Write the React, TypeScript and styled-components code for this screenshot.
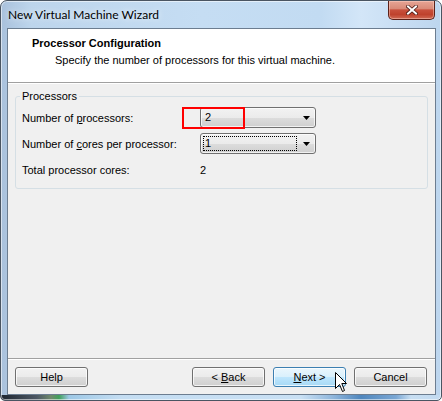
import React from "react";
import styled, { createGlobalStyle } from "styled-components";

const Global = createGlobalStyle`
  html, body { margin: 0; padding: 0; background: #ffffff; }
  body { font-family: "Liberation Sans", Arial, sans-serif; }
  * { box-sizing: border-box; }
`;

const Window = styled.div`
  position: relative;
  width: 442px;
  height: 401px;
  display: flex;
  flex-direction: column;
  padding: 0 5px 5px 6px;
  border: 1px solid #4a5562;
  border-radius: 7px 7px 5px 5px;
  box-shadow: inset 0 0 0 1px rgba(255, 255, 255, 0.55);
  background:
    linear-gradient(
        to right,
        #1e2630 0px,
        #4d5864 36px,
        #6f8a6c 50px,
        #3fa05a 58px,
        #9dc8e6 68px,
        #c4ddf2 120px,
        #c9e0f4 300px,
        #8fb6dc 332px,
        #4f86bd 360px,
        #7aa7d4 395px,
        #c7def2 410px,
        #c2daf0 442px
      )
      left bottom / 100% 5px no-repeat,
    linear-gradient(
      to right,
      #a9c1dc 0px,
      #bdd5ec 30px,
      #c5ddf3 200px,
      #c2dbf2 320px,
      #d3e6f8 360px,
      #bcd5ee 442px
    );
`;

const TitleBar = styled.div`
  height: 27px;
  display: flex;
  align-items: flex-start;
  justify-content: space-between;
`;

const TitleText = styled.span`
  font-family: Lato, "Noto Sans", sans-serif;
  font-size: 12px;
  line-height: 16px;
  color: #000;
  margin: 6px 0 0 1px;
  text-shadow: 0 0 6px rgba(255, 255, 255, 0.9);
`;

const CloseButton = styled.div`
  width: 47px;
  height: 19px;
  margin-right: 1px;
  border: 1px solid #5b2119;
  border-top: none;
  border-radius: 0 0 5px 5px;
  background: linear-gradient(
    #e6a595 0%,
    #d98a78 42%,
    #c8503c 50%,
    #bf422d 75%,
    #d06a54 100%
  );
  box-shadow: inset 0 0 0 1px rgba(255, 215, 205, 0.45);
  display: flex;
  align-items: center;
  justify-content: center;
`;

const Client = styled.div`
  flex: 1;
  display: flex;
  flex-direction: column;
  border: 1px solid #6c7d90;
  background: #f0f0f0;
  font-size: 11px;
  color: #000;
`;

const Header = styled.div`
  height: 54px;
  background: #ffffff;
  border-bottom: 1px solid #a0a0a0;
  padding: 7px 0 0 24px;
`;

const HeaderTitle = styled.div`
  font-weight: bold;
  font-size: 11px;
  line-height: 14px;
  margin-bottom: 3px;
`;

const HeaderSub = styled.div`
  font-size: 11px;
  line-height: 14px;
  margin-left: 23px;
`;

const Body = styled.div`
  flex: 1;
  border-top: 1px solid #ffffff;
  padding: 5px 7px 0 7px;
`;

const Group = styled.fieldset`
  margin: 0;
  padding: 0 6px 8px 6px;
  border: 1px solid #d5dfe5;
  border-radius: 3px;
`;

const GroupLegend = styled.legend`
  margin-left: -2px;
  padding: 0 2px;
  font-size: 11px;
  line-height: 14px;
`;

const FormGrid = styled.div`
  margin-top: 4px;
  display: grid;
  grid-template-columns: 178px 116px;
  grid-auto-rows: 21px;
  row-gap: 5px;
  align-items: center;
`;

const Label = styled.span`
  line-height: 14px;
`;

const ComboWrap = styled.div`
  position: relative;
  height: 21px;
`;

const Highlight = styled.div`
  position: absolute;
  left: -18px;
  top: 0;
  width: 63px;
  height: 22px;
  border: 2px solid #ff0000;
  pointer-events: none;
`;

const Combo = styled.div`
  height: 21px;
  display: flex;
  padding: 2px;
  border: 1px solid #707070;
  border-radius: 3px;
  background: linear-gradient(#f2f2f2 0%, #ebebeb 50%, #dddddd 50%, #cfcfcf 100%);
  box-shadow: inset 0 0 0 1px rgba(255, 255, 255, 0.7);
`;

const ComboValue = styled.div<{ $focused?: boolean }>`
  flex: 1;
  display: flex;
  align-items: center;
  padding-left: 1px;
  border: 1px dotted ${(p) => (p.$focused ? "#000" : "transparent")};
  line-height: 13px;
`;

const ComboArrow = styled.div`
  width: 16px;
  display: flex;
  align-items: center;
  justify-content: flex-end;
  padding-right: 3px;
`;

const Value = styled.span`
  line-height: 14px;
`;

const Footer = styled.div`
  border-top: 1px solid #a0a0a0;
  box-shadow: inset 0 1px 0 #ffffff;
  padding: 8px 8px 7px 7px;
  display: flex;
  align-items: center;
`;

const ButtonGroup = styled.div`
  margin-left: auto;
  display: flex;
  gap: 8px;
`;

const Button = styled.div<{ $hover?: boolean }>`
  width: 73px;
  height: 20px;
  display: flex;
  align-items: center;
  justify-content: center;
  font-size: 11px;
  line-height: 14px;
  border: 1px solid ${(p) => (p.$hover ? "#3c7fb1" : "#707070")};
  border-radius: 3px;
  background: ${(p) =>
    p.$hover
      ? "linear-gradient(#eaf6fd 0%, #d9f0fc 50%, #bee6fd 50%, #a7d9f5 100%)"
      : "linear-gradient(#f2f2f2 0%, #ebebeb 50%, #dddddd 50%, #cfcfcf 100%)"};
  box-shadow: inset 0 0 0 1px rgba(255, 255, 255, 0.75);
`;

const ButtonText = styled.span`
  white-space: pre;
`;

const Cursor = styled.svg`
  position: absolute;
  left: 334px;
  top: 371px;
  pointer-events: none;
`;

const ArrowDown = () => (
  <svg width="7" height="4" viewBox="0 0 7 4">
    <polygon points="0,0 7,0 3.5,4" fill="#000" />
  </svg>
);

export default function App() {
  return (
    <>
      <Global />
      <Window>
        <TitleBar>
          <TitleText>New Virtual Machine Wizard</TitleText>
          <CloseButton>
            <svg width="12" height="10" viewBox="0 0 12 10">
              <path d="M2 1.5 L10 8.5 M10 1.5 L2 8.5" stroke="#4a1a14" strokeWidth="3.6" strokeLinecap="square" />
              <path d="M2 1.5 L10 8.5 M10 1.5 L2 8.5" stroke="#ffffff" strokeWidth="2" strokeLinecap="square" />
            </svg>
          </CloseButton>
        </TitleBar>
        <Client>
          <Header>
            <HeaderTitle>Processor Configuration</HeaderTitle>
            <HeaderSub>Specify the number of processors for this virtual machine.</HeaderSub>
          </Header>
          <Body>
            <Group>
              <GroupLegend>Processors</GroupLegend>
              <FormGrid>
                <Label>
                  Number of <u>p</u>rocessors:
                </Label>
                <ComboWrap>
                  <Combo>
                    <ComboValue>2</ComboValue>
                    <ComboArrow>
                      <ArrowDown />
                    </ComboArrow>
                  </Combo>
                  <Highlight />
                </ComboWrap>
                <Label>
                  Number of <u>c</u>ores per processor:
                </Label>
                <ComboWrap>
                  <Combo>
                    <ComboValue $focused>1</ComboValue>
                    <ComboArrow>
                      <ArrowDown />
                    </ComboArrow>
                  </Combo>
                </ComboWrap>
                <Label>Total processor cores:</Label>
                <Value>2</Value>
              </FormGrid>
            </Group>
          </Body>
          <Footer>
            <Button>
              <ButtonText>Help</ButtonText>
            </Button>
            <ButtonGroup>
              <Button>
                <ButtonText>
                  {"< "}
                  <u>B</u>ack
                </ButtonText>
              </Button>
              <Button $hover>
                <ButtonText>
                  <u>N</u>
                  {"ext >"}
                </ButtonText>
              </Button>
              <Button>
                <ButtonText>Cancel</ButtonText>
              </Button>
            </ButtonGroup>
          </Footer>
        </Client>
        <Cursor width="13" height="20" viewBox="0 0 13 20">
          <path
            d="M0.5 0.5 L0.5 16.5 L4.5 12.5 L7.5 19.5 L9.5 18.5 L6.8 11.5 L11.5 11.5 Z"
            fill="#ffffff"
            stroke="#000000"
            strokeWidth="1"
            strokeLinejoin="miter"
          />
        </Cursor>
      </Window>
    </>
  );
}
